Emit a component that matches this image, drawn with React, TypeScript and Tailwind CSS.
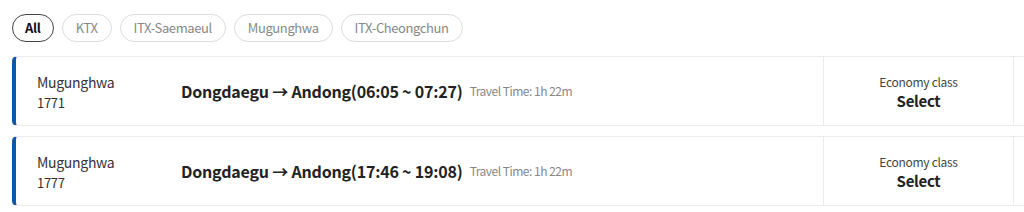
import React from "react";

const chips = ["All", "KTX", "ITX-Saemaeul", "Mugunghwa", "ITX-Cheongchun"];

const trains = [
  { type: "Mugunghwa", no: "1771", dep: "06:05", arr: "07:27" },
  { type: "Mugunghwa", no: "1777", dep: "17:46", arr: "19:08" },
];

export default function App() {
  return (
    <div
      className="w-[1024px] h-[212px] bg-white overflow-hidden text-[#222]"
      style={{ fontFamily: '"Noto Sans CJK KR", "Noto Sans", sans-serif' }}
    >
      <div className="flex gap-2 pl-3 pt-[14px]">
        {chips.map((c, i) => (
          <div
            key={c}
            className={
              i === 0
                ? "h-[28px] px-[12px] rounded-full border-[1.5px] border-[#444] flex items-center text-[13px] font-bold text-[#111] tracking-[-0.3px]"
                : "h-[28px] px-[13px] rounded-full border border-[#dcdcdc] flex items-center text-[13px] text-[#888] tracking-[-0.4px]"
            }
          >
            {c}
          </div>
        ))}
      </div>
      <div className="flex flex-col gap-[10px] pl-3 mt-[14px]">
        {trains.map((t) => (
          <div
            key={t.no}
            className="h-[70px] w-[1040px] flex rounded-l-[5px] border-l-[4px] border-l-[#0b59a8] border-y border-y-[#ececec] bg-white"
          >
            <div className="w-[165px] pl-[21px] pt-[2px] flex flex-col justify-center tracking-[-0.3px]">
              <div className="text-[14px] leading-[20px] text-[#333]">{t.type}</div>
              <div className="text-[13px] leading-[20px] text-[#333] mt-[1px]">{t.no}</div>
            </div>
            <div className="w-[642px] flex items-center">
              <span className="text-[16px] font-bold text-[#222] tracking-[-0.2px]">
                Dongdaegu → Andong({t.dep} ~ {t.arr})
              </span>
              <span className="text-[12px] text-[#888] ml-[7px] tracking-[-0.5px]">Travel Time: 1h 22m</span>
            </div>
            <div className="w-[190px] border-l border-[#ececec] pt-[3px] flex flex-col items-center justify-center tracking-[-0.3px]">
              <div className="text-[12px] leading-[16px] text-[#444]">Economy class</div>
              <div className="text-[15px] leading-[22px] font-bold text-[#222]">Select</div>
            </div>
            <div className="flex-1 border-l border-[#ececec]" />
          </div>
        ))}
      </div>
    </div>
  );
}
